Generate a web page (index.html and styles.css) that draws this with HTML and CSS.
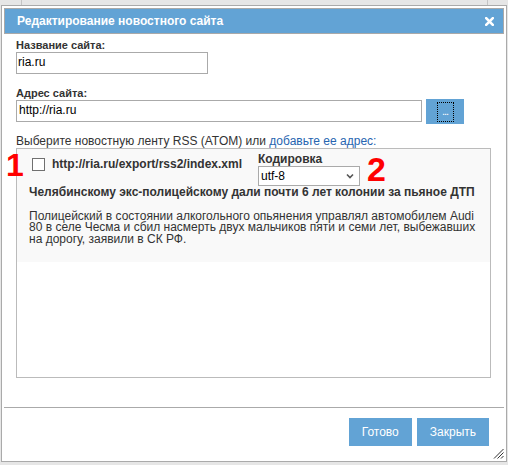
FILE: index.html
```html
<!DOCTYPE html>
<html lang="ru">
<head>
<meta charset="utf-8">
<title>Редактирование новостного сайта</title>
<link rel="stylesheet" href="styles.css">
</head>
<body>
<div class="strip"><span class="tick"></span><span class="tick tick-r"></span></div>
<div class="dialog">
  <div class="titlebar">
    <span class="title">Редактирование новостного сайта</span>
    <svg class="close" width="9" height="9" viewBox="0 0 9 9"><path d="M1.2 1.2 L7.8 7.8 M7.8 1.2 L1.2 7.8" stroke="#fff" stroke-width="2.6" stroke-linecap="square"/></svg>
  </div>
  <div class="content">
    <div class="label">Название сайта:</div>
    <div class="input input-short">ria.ru</div>
    <div class="label label-2">Адрес сайта:</div>
    <div class="addr-row">
      <div class="input input-long">http://ria.ru</div>
      <div class="btn-browse"><span class="focus">...</span></div>
    </div>
    <div class="intro">Выберите новостную ленту RSS (ATOM) или <a class="link">добавьте ее адрес:</a></div>
    <div class="feedbox">
      <div class="feed-item">
        <div class="feed-top">
          <div class="feed-url"><span class="checkbox"></span><span class="url">http://ria.ru/export/rss2/index.xml</span></div>
          <div class="enc">
            <div class="enc-label">Кодировка</div>
            <div class="select"><span>utf-8</span>
              <svg class="chev" width="8" height="6" viewBox="0 0 8 6"><path d="M1 1.5 L4 4.5 L7 1.5" fill="none" stroke="#555" stroke-width="1.6"/></svg>
            </div>
          </div>
        </div>
        <div class="headline">Челябинскому экс-полицейскому дали почти 6 лет колонии за пьяное ДТП</div>
        <p class="summary">Полицейский в состоянии алкогольного опьянения управлял автомобилем Audi<br>80 в селе Чесма и сбил насмерть двух мальчиков пяти и семи лет, выбежавших<br>на дорогу, заявили в СК РФ.</p>
      </div>
      <span class="mark mark-1">1</span>
      <span class="mark mark-2">2</span>
    </div>
  </div>
  <div class="footer">
    <button class="btn">Готово</button>
    <button class="btn">Закрыть</button>
  </div>
  <svg class="grip" width="11" height="11" viewBox="0 0 11 11"><path d="M10.5 1 L1 10.5 M10.5 4.5 L4.5 10.5 M10.5 8 L8 10.5" stroke="#333" stroke-width="1"/></svg>
</div>
</body>
</html>
```
FILE: styles.css
```css
* { box-sizing: border-box; }
html, body { margin: 0; padding: 0; }
body {
  background: #e6e6e6;
  font-family: "Liberation Sans", Arial, sans-serif;
  font-size: 12px;
  color: #333;
  width: 508px;
  height: 465px;
  overflow: hidden;
}
.strip { height: 5px; display: flex; }
.tick { width: 1px; height: 5px; background: #c4c4c4; margin-left: 21px; }
.tick-r { margin-left: auto; margin-right: 20px; }

.dialog {
  position: relative;
  margin-left: 1px;
  width: 506px;
  height: 457px;
  border: 1px solid #aaa;
  background: #fff;
  padding: 2px;
  display: flex;
  flex-direction: column;
}
.titlebar {
  height: 26px;
  border: 1px solid #a9a9a9;
  background: #62a3d5;
  display: flex;
  align-items: center;
  justify-content: space-between;
  padding: 0 9px 0 12px;
  flex: none;
}
.title {
  color: #fff;
  font-weight: bold;
  font-size: 12px;
  line-height: 24px;
}
.close { display: block; margin-top: 1px; }

.content {
  flex: 1;
  padding: 5px 0 0 12px;
}
.label {
  font-weight: bold;
  font-size: 11px;
  line-height: 13px;
  color: #333;
}
.label-2 { margin-top: 13px; }
.input {
  height: 22px;
  border: 1px solid #aaa;
  background: #fff;
  font-size: 12px;
  line-height: 18px;
  padding: 0 0 2px 2px;
  color: #000;
}
.input-short { width: 192px; padding-left: 1px; }
.input-long { width: 406px; }
.addr-row { display: flex; align-items: flex-start; gap: 4px; }
.btn-browse {
  width: 38px;
  height: 25px;
  margin-top: -1px;
  background: #62a3d5;
  display: flex;
  justify-content: center;
  align-items: center;
}
.focus {
  width: 17px;
  height: 20px;
  border: 1px dotted #000;
  color: #fff;
  font-size: 11px;
  line-height: 16px;
  text-align: center;
  letter-spacing: -1px;
}
.intro {
  margin-top: 11px;
  line-height: 13px;
  color: #333;
}
.link { color: #2765b0; text-decoration: none; }

.feedbox {
  position: relative;
  width: 475px;
  height: 230px;
  border: 1px solid #bbb;
  background: #fff;
}
.feed-item {
  background: #f9f9f9;
  padding: 4px 12px 17px 12px;
}
.feed-top { display: flex; align-items: flex-start; }
.feed-url {
  width: 229px;
  display: flex;
  align-items: center;
  margin-top: 5px;
  height: 13px;
}
.checkbox {
  width: 13px;
  height: 13px;
  margin-left: 3px;
  border: 1px solid #707070;
  background: #fff;
  flex: none;
}
.url {
  margin-left: 7px;
  font-weight: bold;
  line-height: 13px;
  color: #333;
  white-space: nowrap;
}
.enc-label { font-weight: bold; line-height: 13px; color: #333; }
.select {
  width: 102px;
  height: 20px;
  border: 1px solid #aaa;
  background: #fff;
  display: flex;
  align-items: center;
  justify-content: space-between;
  padding: 0 5px 0 2px;
  color: #000;
  line-height: 18px;
}
.chev { display: block; }
.headline {
  font-weight: bold;
  line-height: 12px;
  color: #333;
  white-space: nowrap;
}
.summary {
  margin: 13px 0 0 0;
  line-height: 11.3px;
  color: #333;
  white-space: nowrap;
}
.mark {
  position: absolute;
  color: #f00;
  font-weight: bold;
  line-height: 1;
}
.mark-1 { font-size: 32px; left: -11px; top: 0; }
.mark-2 { font-size: 34px; left: 350px; top: 3px; }

.footer {
  flex: none;
  border-top: 1px solid #aaa;
  padding: 10px 15px 13px 0;
  display: flex;
  justify-content: flex-end;
  gap: 5px;
}
.btn {
  height: 28px;
  border: none;
  background: #62a3d5;
  color: #fff;
  font-family: "Liberation Sans", Arial, sans-serif;
  font-size: 12px;
  padding: 0 13px;
  margin: 0;
}
.grip {
  position: absolute;
  right: 2px;
  bottom: 2px;
}
```
